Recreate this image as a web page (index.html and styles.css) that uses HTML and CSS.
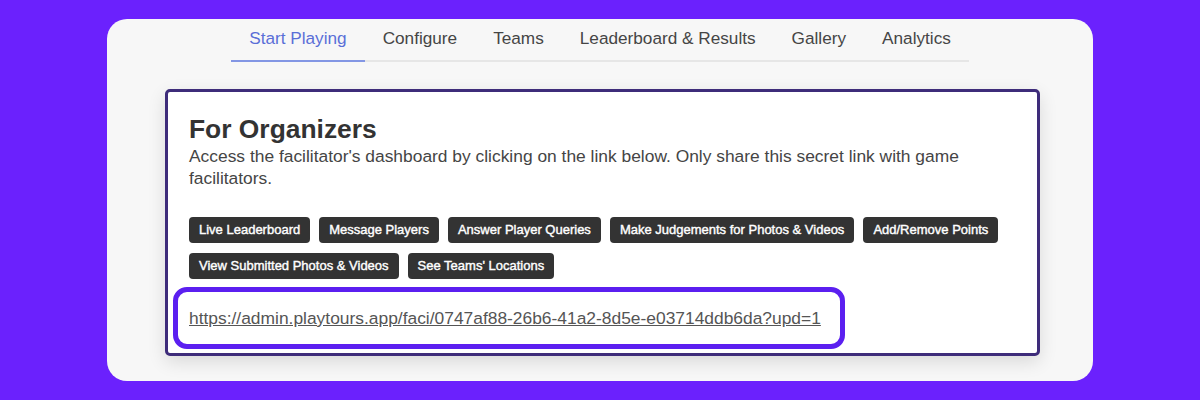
FILE: index.html
```html
<!DOCTYPE html>
<html lang="en">
<head>
    <meta charset="UTF-8">
    <meta name="viewport" content="width=device-width, initial-scale=1.0">
    <title>Start Playing - Organizers</title>
    <link rel="stylesheet" href="styles.css">
</head>
<body>
    <div class="panel">
        <nav class="tabs">
            <a class="tab active" href="#">Start Playing</a>
            <a class="tab" href="#">Configure</a>
            <a class="tab" href="#">Teams</a>
            <a class="tab" href="#">Leaderboard &amp; Results</a>
            <a class="tab" href="#">Gallery</a>
            <a class="tab" href="#">Analytics</a>
        </nav>

        <div class="card">
            <h2>For Organizers</h2>
            <p>Access the facilitator's dashboard by clicking on the link below. Only share this secret link with game facilitators.</p>

            <div class="actions">
                <button>Live Leaderboard</button>
                <button>Message Players</button>
                <button>Answer Player Queries</button>
                <button>Make Judgements for Photos &amp; Videos</button>
                <button>Add/Remove Points</button>
                <button>View Submitted Photos &amp; Videos</button>
                <button>See Teams' Locations</button>
            </div>

            <div class="link-box">
                <a href="#">https://admin.playtours.app/faci/0747af88-26b6-41a2-8d5e-e03714ddb6da?upd=1</a>
            </div>
        </div>
    </div>
</body>
</html>
```

FILE: styles.css
```css
body {
    font-family: 'Liberation Sans', Arial, sans-serif;
    margin: 0;
    height: 400px;
    background: #6b21fd;
    overflow: hidden;
}

.panel {
    margin: 19px 107px 0;
    height: 362px;
    background: #f7f7f7;
    border-radius: 20px;
    box-sizing: border-box;
    overflow: hidden;
}

.tabs {
    display: flex;
    width: fit-content;
    margin: 0 auto;
    border-bottom: 2px solid #e6e6e6;
}

.tab {
    padding: 9px 18px 12px;
    font-size: 17.2px;
    line-height: 20px;
    color: #454545;
    text-decoration: none;
    border-bottom: 2px solid transparent;
    margin-bottom: -2px;
}

.tab.active {
    color: #5a6fd7;
    border-bottom-color: #8396e4;
}

.card {
    width: 875px;
    box-sizing: border-box;
    margin: 27px 0 0 58px;
    padding: 22px 21px 4px;
    background: white;
    border: 3px solid #3e2c7a;
    border-radius: 5px;
    box-shadow: 0 6px 18px rgba(0,0,0,0.12);
}

.card h2 {
    margin: 0;
    font-size: 26.4px;
    line-height: 31px;
    color: #333;
}

.card p {
    margin: 0;
    font-size: 17.4px;
    line-height: 22px;
    color: #454545;
}

.actions {
    display: flex;
    flex-wrap: wrap;
    gap: 10px 9px;
    margin-top: 28px;
}

.actions button {
    font-family: inherit;
    font-size: 13px;
    line-height: 14px;
    padding: 6px 10px;
    color: white;
    background: #333;
    border: none;
    border-radius: 4px;
    -webkit-text-stroke: 0.4px white;
}

.link-box {
    width: fit-content;
    margin: 8px 0 0 -16px;
    padding: 16px 19px 16px 11px;
    border: 5px solid #5b1ff0;
    border-radius: 14px;
}

.link-box a {
    font-size: 17.4px;
    line-height: 20px;
    color: #555;
}
```
